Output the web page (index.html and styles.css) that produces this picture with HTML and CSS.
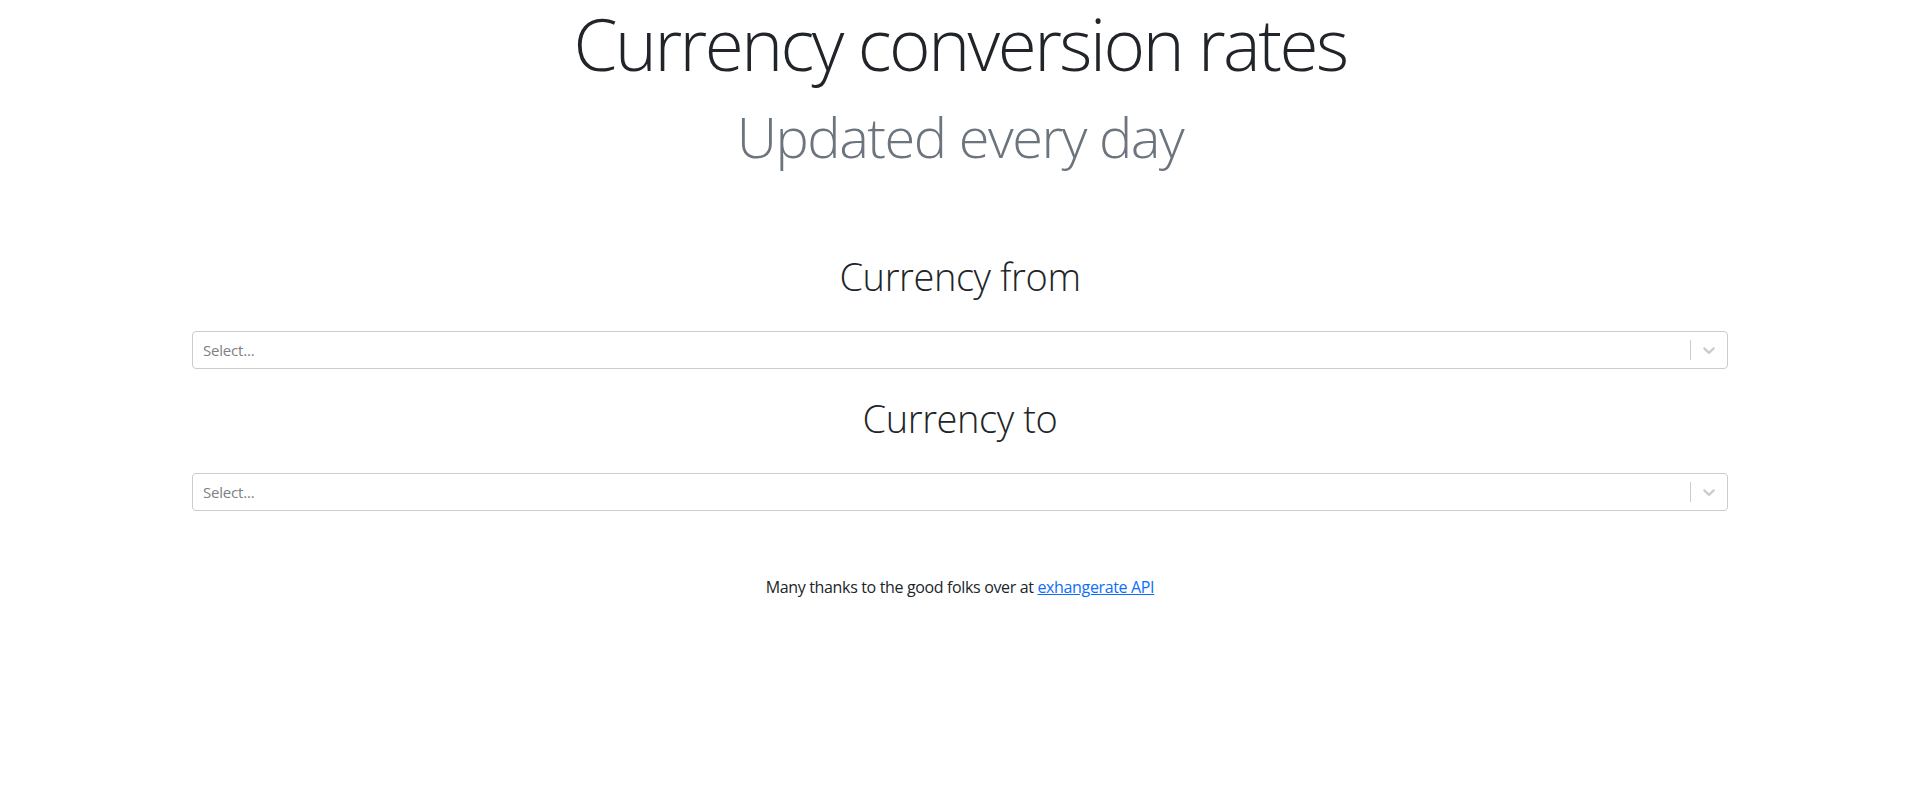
FILE: index.html
```html
<!DOCTYPE html>
<html lang="en">
<head>
<meta charset="utf-8">
<title>Currency conversion rates</title>
<link rel="stylesheet" href="styles.css">
</head>
<body>
<header class="hero">
  <h1 class="title">Currency conversion rates</h1>
  <h2 class="subtitle">Updated every day</h2>
</header>
<main class="converter">
  <h3 class="label label-from">Currency from</h3>
  <div class="select">
    <div class="select-value">Select...</div>
    <div class="select-indicators">
      <span class="select-sep"></span>
      <div class="select-arrow">
        <svg width="20" height="20" viewBox="0 0 20 20" aria-hidden="true"><path d="M4.516 7.548c0.436-0.446 1.043-0.481 1.576 0l3.908 3.747 3.908-3.747c0.533-0.481 1.141-0.446 1.574 0 0.436 0.445 0.408 1.197 0 1.615-0.406 0.418-4.695 4.502-4.695 4.502-0.217 0.223-0.502 0.335-0.787 0.335s-0.57-0.112-0.789-0.335c0 0-4.287-4.084-4.695-4.502s-0.436-1.170 0-1.615z"/></svg>
      </div>
    </div>
  </div>
  <h3 class="label label-to">Currency to</h3>
  <div class="select">
    <div class="select-value">Select...</div>
    <div class="select-indicators">
      <span class="select-sep"></span>
      <div class="select-arrow">
        <svg width="20" height="20" viewBox="0 0 20 20" aria-hidden="true"><path d="M4.516 7.548c0.436-0.446 1.043-0.481 1.576 0l3.908 3.747 3.908-3.747c0.533-0.481 1.141-0.446 1.574 0 0.436 0.445 0.408 1.197 0 1.615-0.406 0.418-4.695 4.502-4.695 4.502-0.217 0.223-0.502 0.335-0.787 0.335s-0.57-0.112-0.789-0.335c0 0-4.287-4.084-4.695-4.502s-0.436-1.170 0-1.615z"/></svg>
      </div>
    </div>
  </div>
  <p class="credits">Many thanks to the good folks over at <a href="#">exhangerate API</a></p>
</main>
</body>
</html>
```

FILE: styles.css
```css
* { box-sizing: border-box; }
html, body {
  margin: 0;
  padding: 0;
  background: #fff;
}
body {
  font-family: "Open Sans", "Noto Sans", sans-serif;
  color: #212529;
  font-size: 16px;
  line-height: 1.5;
}
.hero {
  text-align: center;
  padding-top: 2px;
}
.title {
  margin: 0;
  font-size: 71px;
  font-weight: 300;
  line-height: 84px;
  letter-spacing: -2.5px;
  color: #212529;
}
.subtitle {
  margin: 17px 0 0;
  font-size: 56px;
  font-weight: 300;
  line-height: 1.2;
  letter-spacing: -1.5px;
  color: #6c757d;
}
.converter {
  width: 80%;
  margin: 0 auto;
  display: flex;
  flex-direction: column;
}
.label {
  text-align: center;
  font-size: 38px;
  font-weight: 300;
  line-height: 1.2;
  letter-spacing: -0.4px;
  margin: 0;
  color: #212529;
}
.label-from { margin-top: 84px; margin-bottom: 31px; }
.label-to { margin-top: 27px; margin-bottom: 32px; }
.select {
  height: 38px;
  border: 1px solid #cccccc;
  border-radius: 4px;
  background: #fff;
  display: flex;
  align-items: center;
}
.select-value {
  flex: 1;
  padding: 2px 8px;
  margin-left: 2px;
  color: #808080;
  font-size: 15px;
  letter-spacing: -0.2px;
}
.select-indicators {
  display: flex;
  align-items: stretch;
  align-self: stretch;
}
.select-sep {
  width: 1px;
  margin: 8px 0;
  background: #cccccc;
}
.select-arrow {
  padding: 8px;
  display: flex;
  align-items: center;
  color: #cccccc;
}
.select-arrow svg {
  display: block;
  fill: currentColor;
}
.credits {
  margin: 64px 0 0;
  text-align: center;
  font-size: 16px;
  letter-spacing: -0.35px;
}
.credits a {
  color: #0d6efd;
  text-decoration: underline;
}
```
